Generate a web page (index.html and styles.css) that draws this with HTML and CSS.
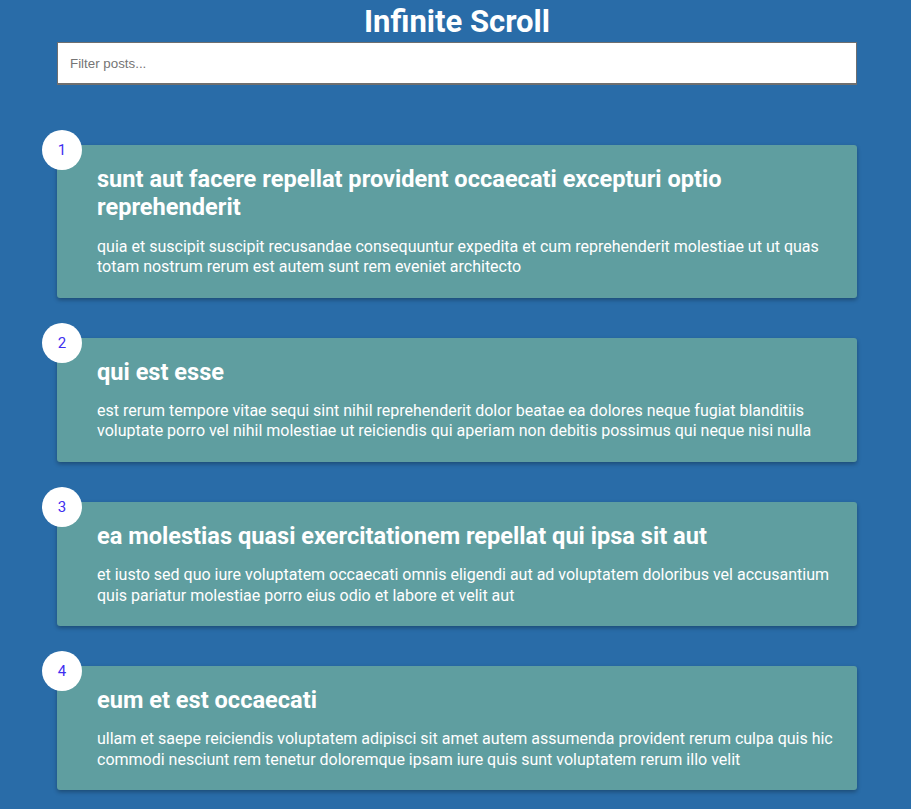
FILE: index.html
```html
<!DOCTYPE html>
<html lang="en">
<head>
<meta charset="UTF-8">
<title>Infinite Scroll</title>
<link rel="stylesheet" href="styles.css">
</head>
<body>
<div class="container">
  <h1 class="page-title">Infinite Scroll</h1>
  <div class="filter-container">
    <input type="text" class="filter" placeholder="Filter posts...">
  </div>
  <div class="posts">
    <div class="post">
      <div class="number">1</div>
      <div class="post-info">
        <h2 class="post-title">sunt aut facere repellat provident occaecati excepturi optio reprehenderit</h2>
        <p class="post-body">quia et suscipit suscipit recusandae consequuntur expedita et cum reprehenderit molestiae ut ut quas totam nostrum rerum est autem sunt rem eveniet architecto</p>
      </div>
    </div>
    <div class="post">
      <div class="number">2</div>
      <div class="post-info">
        <h2 class="post-title">qui est esse</h2>
        <p class="post-body">est rerum tempore vitae sequi sint nihil reprehenderit dolor beatae ea dolores neque fugiat blanditiis voluptate porro vel nihil molestiae ut reiciendis qui aperiam non debitis possimus qui neque nisi nulla</p>
      </div>
    </div>
    <div class="post">
      <div class="number">3</div>
      <div class="post-info">
        <h2 class="post-title">ea molestias quasi exercitationem repellat qui ipsa sit aut</h2>
        <p class="post-body">et iusto sed quo iure voluptatem occaecati omnis eligendi aut ad voluptatem doloribus vel accusantium quis pariatur molestiae porro eius odio et labore et velit aut</p>
      </div>
    </div>
    <div class="post">
      <div class="number">4</div>
      <div class="post-info">
        <h2 class="post-title">eum et est occaecati</h2>
        <p class="post-body">ullam et saepe reiciendis voluptatem adipisci sit amet autem assumenda provident rerum culpa quis hic commodi nesciunt rem tenetur doloremque ipsam iure quis sunt voluptatem rerum illo velit</p>
      </div>
    </div>
    <div class="post">
      <div class="number">5</div>
      <div class="post-info">
        <h2 class="post-title">nesciunt quas odio</h2>
        <p class="post-body">repudiandae veniam quaerat sunt sed alias aut fugiat sit autem sed est voluptatem omnis possimus esse voluptatibus quis est aut tenetur dolor neque</p>
      </div>
    </div>
  </div>
</div>
</body>
</html>
```

FILE: styles.css
```css
* {
  box-sizing: border-box;
}

html,
body {
  margin: 0;
}

body {
  background-color: #296ca8;
  color: #fff;
  font-family: Roboto, "Noto Sans", sans-serif;
  padding: 0 0 100px 3px;
  overflow: hidden;
}

.container {
  width: 800px;
  margin: 0 auto;
}

.page-title {
  margin: 3px 0 0;
  font-size: 31px;
  line-height: 37px;
  font-weight: 700;
  text-align: center;
}

.filter-container {
  margin-top: 2px;
}

.filter {
  display: block;
  width: 100%;
  height: 43px;
  padding: 0 12px;
  font-family: "Liberation Sans", Arial, sans-serif;
  font-size: 13.333px;
  color: #333;
  background: #fff;
  border: 1px solid #6f6f6f;
  border-bottom-width: 2px;
  outline: none;
}

.filter::placeholder {
  color: #757575;
}

.posts {
  padding-top: 20px;
}

.post {
  position: relative;
  display: flex;
  background-color: #5f9ea0;
  border-radius: 3px;
  box-shadow: 0 2px 4px rgba(0, 0, 0, 0.3);
  padding: 20px 20px 20px 40px;
  margin: 40px 0;
}

.number {
  position: absolute;
  top: -15px;
  left: -15px;
  width: 40px;
  height: 40px;
  border-radius: 50%;
  background: #fff;
  color: #3f2ff0;
  font-size: 15px;
  display: flex;
  align-items: center;
  justify-content: center;
}

.post-title {
  margin: 0;
  font-size: 23.6px;
  line-height: 28.4px;
  font-weight: 700;
}

.post-body {
  margin: 15px 0 0;
  font-size: 16px;
  line-height: 20.4px;
}
```
